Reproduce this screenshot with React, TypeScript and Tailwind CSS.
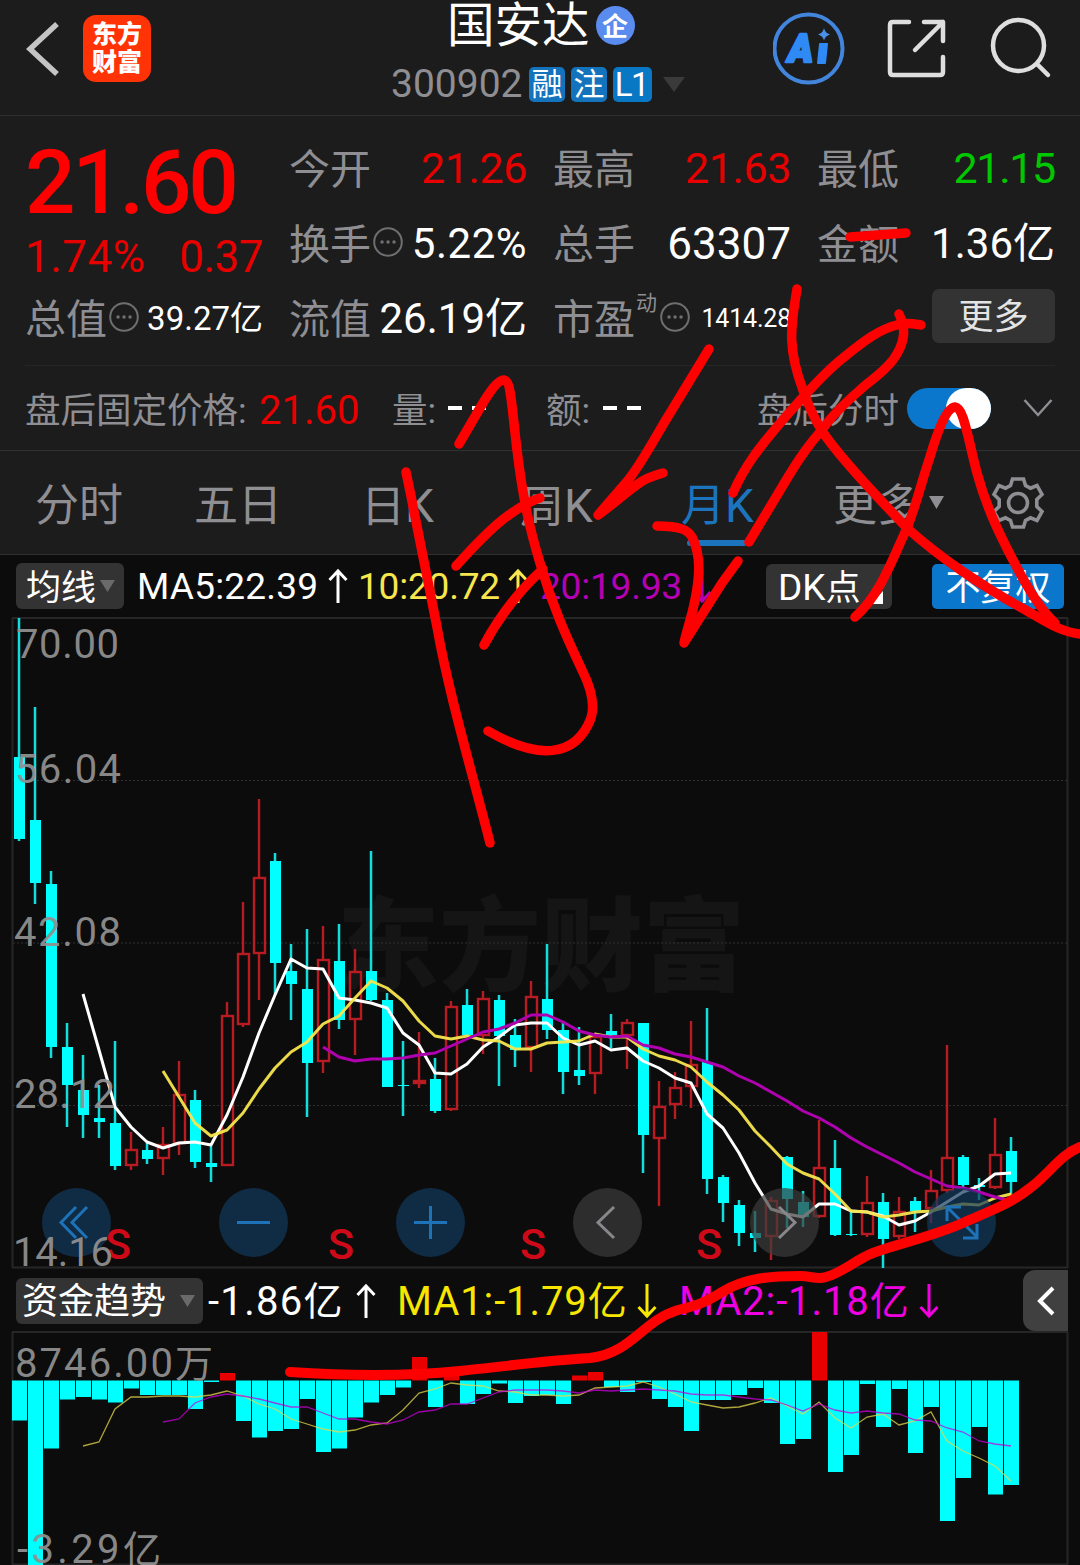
import { ReactNode } from 'react'
import clsx from 'clsx'

type Candle = [high: number, top: number, bottom: number, low: number, up?: 1]

// y positions on the price canvas, one entry per month
const candles: Candle[] = [
  [618, 757, 839, 841], [707, 820, 883, 904], [871, 884, 1047, 1058], [1023, 1047, 1085, 1127],
  [1055, 1090, 1115, 1138], [1085, 1118, 1122, 1138], [1041, 1123, 1166, 1170], [1132, 1149, 1166, 1170, 1],
  [1143, 1150, 1159, 1164], [1127, 1144, 1159, 1175, 1], [1061, 1094, 1144, 1155, 1], [1090, 1100, 1162, 1168],
  [1146, 1163, 1167, 1182], [1002, 1015, 1166, 1166, 1], [902, 953, 1025, 1027, 1], [799, 877, 954, 1000, 1],
  [853, 861, 963, 995], [944, 971, 984, 1020], [929, 989, 1063, 1117], [926, 959, 1062, 1073, 1],
  [924, 961, 1020, 1029], [949, 971, 1020, 1055, 1], [851, 971, 1000, 1001], [993, 1000, 1087, 1087],
  [1041, 1085, 1086, 1116], [1032, 1080, 1084, 1088, 1], [1058, 1079, 1111, 1113], [1001, 1006, 1110, 1111, 1],
  [989, 1005, 1035, 1036], [991, 998, 1036, 1054, 1], [995, 1000, 1036, 1086], [1019, 1035, 1050, 1067],
  [981, 996, 1048, 1072, 1], [944, 999, 1030, 1039], [1023, 1030, 1072, 1094], [1027, 1070, 1076, 1085],
  [1033, 1036, 1074, 1094, 1], [1014, 1031, 1035, 1048], [1019, 1022, 1036, 1069, 1], [1023, 1023, 1135, 1173],
  [1081, 1106, 1139, 1206, 1], [1072, 1087, 1105, 1119, 1], [1021, 1064, 1087, 1108, 1], [1008, 1062, 1179, 1194],
  [1175, 1177, 1203, 1222], [1200, 1205, 1233, 1246], [1211, 1233, 1238, 1252], [1197, 1200, 1237, 1260, 1],
  [1156, 1157, 1199, 1228], [1191, 1202, 1217, 1227], [1120, 1167, 1217, 1218, 1], [1140, 1168, 1235, 1236],
  [1210, 1234, 1235, 1236], [1176, 1202, 1235, 1237, 1], [1193, 1202, 1239, 1268], [1197, 1211, 1237, 1239, 1],
  [1197, 1201, 1211, 1232], [1170, 1190, 1209, 1223, 1], [1045, 1157, 1191, 1193, 1], [1155, 1157, 1185, 1187],
  [1178, 1185, 1187, 1200], [1118, 1154, 1188, 1189, 1], [1137, 1151, 1182, 1196],
]

const ma5 = [994, 1050, 1107, 1127, 1142, 1148, 1143, 1142, 1145, 1115, 1077, 1033, 995, 959, 968, 969, 998, 1000, 1003, 1008, 1033, 1045, 1073, 1074, 1064, 1047, 1037, 1025, 1023, 1023, 1038, 1045, 1041, 1050, 1048, 1061, 1068, 1078, 1083, 1114, 1128, 1153, 1183, 1209, 1214, 1217, 1204, 1204, 1211, 1212, 1216, 1225, 1221, 1212, 1202, 1192, 1186, 1174, 1173]
const ma10 = [1071, 1097, 1123, 1136, 1130, 1113, 1089, 1068, 1052, 1042, 1024, 1016, 998, 981, 988, 1001, 1021, 1036, 1039, 1036, 1040, 1041, 1049, 1049, 1043, 1042, 1041, 1034, 1037, 1037, 1049, 1056, 1060, 1067, 1082, 1095, 1110, 1131, 1147, 1164, 1173, 1179, 1194, 1211, 1212, 1217, 1215, 1212, 1211, 1207, 1204, 1205, 1198, 1194]
const ma20 = [1047, 1057, 1061, 1059, 1059, 1058, 1055, 1053, 1046, 1039, 1032, 1029, 1023, 1015, 1015, 1022, 1031, 1035, 1037, 1036, 1045, 1048, 1054, 1057, 1062, 1067, 1076, 1083, 1092, 1101, 1111, 1118, 1127, 1138, 1147, 1155, 1163, 1172, 1179, 1186, 1188, 1192, 1197, 1201]

// end of each flow bar; values above the zero line are inflows
const ZERO = 1380.5
const flows = [1420.5, 1565, 1448.5, 1399.5, 1397, 1399.5, 1402.5, 1388.5, 1395, 1395, 1395, 1409, 1382, 1373, 1421, 1437.5, 1431, 1429, 1399, 1452, 1448.5, 1417.5, 1402.5, 1395, 1387.5, 1357, 1407, 1372, 1404, 1394, 1383.5, 1403, 1396, 1395, 1404, 1375.5, 1372, 1387, 1392, 1382, 1399, 1407, 1431, 1400, 1400, 1395, 1388, 1403, 1444, 1439, 1332, 1472, 1455, 1384, 1427, 1389, 1453, 1407, 1521, 1478, 1427, 1494.5, 1485]
const flowMa1 = [1446, 1442, 1409, 1397, 1397, 1396, 1396, 1397, 1395, 1391, 1396, 1404, 1409, 1419, 1424, 1429, 1432, 1430, 1425, 1423, 1410, 1393, 1389, 1383, 1385, 1386, 1391, 1392, 1395, 1395, 1396, 1395, 1388, 1387, 1386, 1382, 1387, 1394, 1402, 1405, 1408, 1407, 1403, 1398, 1406, 1414, 1402, 1418, 1428, 1417, 1414, 1425, 1421, 1412, 1441, 1451, 1458, 1466, 1481]
const flowMa2 = [1422, 1419, 1403, 1397, 1394, 1396, 1399, 1403, 1407, 1407, 1413, 1419, 1419, 1422, 1424, 1420, 1412, 1410, 1404, 1404, 1398, 1392, 1390, 1390, 1390, 1391, 1393, 1390, 1391, 1390, 1389, 1390, 1391, 1394, 1395, 1395, 1397, 1399, 1400, 1405, 1411, 1404, 1410, 1413, 1411, 1413, 1414, 1420, 1421, 1428, 1432, 1441, 1444, 1446]

const cx = (i: number) => 19 + i * 16
// every series ends on the last month
const line = (ys: number[]) => ys.map((y, i) => `${cx(i + candles.length - ys.length)},${y}`).join(' ')

function Dots() {
  return (
    <svg className="-mt-[6px] ml-[2px] h-[30px] w-[30px] shrink-0" viewBox="0 0 30 30" fill="none" stroke="#6f6f72" strokeWidth="2">
      <circle cx="15" cy="15" r="13.8" />
      <path d="M9 15h.1M15 15h.1M21 15h.1" strokeWidth="3.4" strokeLinecap="round" />
    </svg>
  )
}

function Caret({ className }: { className?: string }) {
  return (
    <svg className={className} viewBox="0 0 20 14" preserveAspectRatio="none" fill="currentColor">
      <path d="M0 0h20L10 14z" />
    </svg>
  )
}

function Arrow({ down, className }: { down?: boolean; className?: string }) {
  return (
    <svg className={clsx('h-[36px] w-[20px] shrink-0', down && 'rotate-180', className)} viewBox="0 0 20 36" fill="none" stroke="currentColor" strokeWidth="3">
      <path d="M10 35V3M1.500 12L10 3l8.500 9" />
    </svg>
  )
}

function Cell({ label, children }: { label: ReactNode; children: ReactNode }) {
  return (
    <div className="flex h-[75px] items-center justify-between whitespace-nowrap pt-[2px]">
      <span className="flex items-center pt-[3px] text-[41px] text-[#8e8e93]">
        {label}
      </span>
      {children}
    </div>
  )
}

function Header() {
  return (
    <header className="flex h-[116px] border-b border-[#303030]">
      <div className="flex w-[391px] pl-[26px] pt-[15px]">
        <svg className="mt-[5px] h-[58px] w-[34px]" viewBox="0 0 34 58" fill="none" stroke="#c4c4c4" strokeWidth="5.500">
          <path d="M31 4L4 29l27 25" />
        </svg>
        <div className="ml-[23px] flex h-[67px] w-[68px] flex-col items-center justify-center rounded-[13px] bg-[#ff3305] text-[25px] font-black leading-[28px] text-white">
          <span>东方</span>
          <span>财富</span>
        </div>
      </div>
      <div className="w-[382px]">
        <div className="flex h-[50px] items-center pl-[56px]">
          <span className="pt-[4px] text-[47.500px] text-white">国安达</span>
          <span className="ml-[6px] flex h-[39px] w-[39px] items-center justify-center rounded-full bg-[#5a8bee] pt-[3px] text-[26px] font-bold text-white">企</span>
        </div>
        <div className="mt-[15px] flex h-[38px] items-center">
          <span className="w-[138px] text-[39px] text-[#8e8e93]">300902</span>
          <div className="flex gap-[6px] text-[31px] text-white">
            <span className="flex h-[35px] w-[36px] items-center justify-center rounded-[5px] bg-[#1373bd]">融</span>
            <span className="flex h-[35px] w-[36px] items-center justify-center rounded-[5px] bg-[#1373bd]">注</span>
            <span className="flex h-[35px] w-[39px] items-center justify-center rounded-[5px] bg-[#0877c4] pr-[2px] text-[33px] tracking-[-1.500px]">L1</span>
          </div>
          <Caret className="ml-[11px] h-[15px] w-[22px] text-[#3a3a3a]" />
        </div>
      </div>
      <svg className="h-[100px] w-[307px]" viewBox="773 0 307 100" fill="none">
        <circle cx="808.500" cy="48.500" r="34" stroke="#4285dc" strokeWidth="4" />
        <text x="788" y="61.500" fontSize="38" fontWeight="900" fontStyle="italic" fill="#2f8af5" stroke="#2f8af5" strokeWidth="2.500" strokeLinejoin="round">A</text>
        <path d="M820 44h7l-2 19h-7z" fill="#2f8af5" stroke="#2f8af5" strokeWidth="2" strokeLinejoin="round" />
        <path d="M824 28q1 5 6 6.500q-5 1.500-6 6q-1-4.500-6-6q5-1.500 6-6.500z" fill="#4a90e8" />
        <g stroke="#dedede" strokeWidth="4.500" strokeLinecap="round" strokeLinejoin="round">
          <path d="M909 22h-16q-3 0-3 3v47q0 3 3 3h47q3 0 3-3V57M924 22h19v19M943 22L915 50" />
          <circle cx="1018.500" cy="45.500" r="25.500" />
          <path d="M1037 64L1048 75" />
        </g>
      </svg>
    </header>
  )
}

function Quote() {
  return (
    <section className="mx-[25px] grid h-[250px] grid-cols-4 gap-[26px] border-b border-[#262626] pt-[14px]">
      <div>
        <div className="flex h-[104px] items-center text-[89px] font-medium tracking-[-3.300px] text-[#ff0000]">21.60</div>
        <div className="flex h-[46px] items-center justify-between text-[44px] text-[#e60000]">
          <span className="tracking-[0.500px]">1.74%</span>
          <span className="tracking-[-0.500px]">0.37</span>
        </div>
        <Cell label={<>总值<Dots /></>}>
          <span className="text-[33px] text-white">39.27亿</span>
        </Cell>
      </div>
      <div>
        <Cell label="今开"><span className="text-[43px] tracking-[-0.400px] text-[#e60000]">21.26</span></Cell>
        <Cell label={<>换手<Dots /></>}><span className="text-[42px] tracking-[0.500px] text-white">5.22%</span></Cell>
        <Cell label="流值"><span className="text-[42px] text-white">26.19亿</span></Cell>
      </div>
      <div>
        <Cell label="最高"><span className="text-[43px] tracking-[-0.400px] text-[#e60000]">21.63</span></Cell>
        <Cell label="总手"><span className="text-[44px] text-white">63307</span></Cell>
        <Cell label={<>市盈<sup className="-top-[17px] mx-px text-[21px]">动</sup><Dots /></>}>
          <span className="text-[25px] tracking-[-0.200px] text-white">1414.28</span>
        </Cell>
      </div>
      <div>
        <Cell label="最低"><span className="text-[43px] tracking-[-1.300px] text-[#00c800]">21.15</span></Cell>
        <Cell label="金额"><span className="text-[42px] text-white">1.36亿</span></Cell>
        <div className="flex h-[71px] items-center justify-end">
          <button className="h-[54px] w-[123px] rounded-[7px] bg-[#333333] pt-[3px] text-[35px] text-[#e4e4e4]">更多</button>
        </div>
      </div>
    </section>
  )
}

function AfterHours() {
  return (
    <section className="flex h-[85px] items-center whitespace-nowrap border-b border-[#303030] pl-[25px] text-[35.500px] text-[#8e8e93]">
      <span className="w-[234px] pt-[7px]">盘后固定价格:</span>
      <span className="w-[133px] pt-[5px] text-[40px] text-[#e60000]">21.60</span>
      <span className="w-[56px] pt-[7px]">量:</span>
      <Dashes />
      <span className="ml-[60px] w-[57px] pt-[7px]">额:</span>
      <Dashes />
      <span className="ml-[116px] w-[150px] pt-[7px]">盘后分时</span>
      <span className="flex h-[41px] w-[84px] justify-end rounded-full bg-[#0a77cc]">
        <span className="h-[41px] w-[45px] rounded-full bg-white" />
      </span>
      <svg className="ml-[32px] h-[20px] w-[30px]" viewBox="0 0 30 20" fill="none" stroke="#8e8e93" strokeWidth="2.500">
        <path d="M1.500 2L15 17L28.500 2" />
      </svg>
    </section>
  )
}

function Dashes() {
  return (
    <span className="flex w-[38px] justify-between">
      <i className="h-[4px] w-[14px] bg-white" />
      <i className="h-[4px] w-[14px] bg-white" />
    </span>
  )
}

function Tabs() {
  return (
    <nav className="flex h-[104px] items-center whitespace-nowrap border-b border-[#303030] pl-[35px] text-[44px] text-[#8e8e93]">
      <span className="w-[159px] pt-[7px]">分时</span>
      <span className="w-[167px] pt-[7px]">五日</span>
      <span className="w-[159px] pt-[7px]">日<span className="text-[46px]">K</span></span>
      <span className="w-[161px] pt-[7px]">周<span className="text-[46px]">K</span></span>
      <span className="flex h-full w-[152px] flex-col text-[#1b74bd]">
        <span className="flex h-[89px] items-center pt-[20px]">月<span className="text-[46px]">K</span></span>
        <i className="ml-[6px] h-[6px] w-[60px] rounded-full bg-[#1b74bd]" />
      </span>
      <span className="pt-[7px]">更多</span>
      <Caret className="ml-[8px] h-[13px] w-[15px]" />
      <svg className="ml-[47px] h-[54px] w-[54px]" viewBox="-27 -27 54 54" fill="none" stroke="#8e8e93" strokeWidth="3.600">
        <circle r="9.500" />
        <path d="M-5.500-24H5.500L7.500-17.500L12.500-14.800L19-17.500L24-8.500L18.800-3.500V3.500L24 8.500L19 17.500L12.500 14.800L7.500 17.500L5.500 24H-5.500L-7.500 17.500L-12.500 14.800L-19 17.500L-24 8.500L-18.800 3.500V-3.500L-24-8.500L-19-17.500L-12.500-14.800L-7.500-17.500Z" />
      </svg>
    </nav>
  )
}

function AverageBar() {
  return (
    <div className="flex h-[62px] items-center whitespace-nowrap pl-[16px] text-[37px]">
      <span className="flex h-[46px] w-[108px] items-center rounded-[6px] bg-[#333333] pl-[10px] text-[35px] text-white">
        <span className="pt-[4px]">均线</span>
        <Caret className="ml-[4px] h-[12px] w-[15px] text-[#6a6a6a]" />
      </span>
      <span className="ml-[13px] w-[191px] tracking-[0.200px] text-white">MA5:22.39</span>
      <Arrow className="h-[34px] text-white" />
      <span className="ml-[10px] w-[150px] tracking-[-0.200px] text-[#f7e64e]">10:20.72</span>
      <Arrow className="h-[34px] text-[#f7e64e]" />
      <span className="ml-[12px] w-[152px] tracking-[-0.200px] text-[#b500b5]">20:19.93</span>
      <Arrow down className="h-[34px] text-[#b500b5]" />
      <span className="ml-[54px] flex h-[45px] w-[126px] items-center rounded-[6px] bg-[#333333] pl-[12px] text-white">
        <span className="pt-[2px]">DK<span className="text-[35px]">点</span></span>
        <svg className="ml-[10px] mt-[22px] h-[13px] w-[12px]" viewBox="0 0 12 12" preserveAspectRatio="none"><path d="M12 0v12H0z" fill="#fff" /></svg>
      </span>
      <span className="ml-[40px] flex h-[45px] w-[132px] items-center justify-center rounded-[5px] bg-[#0a77cc] pt-[4px] text-[35px] text-white">不复权</span>
    </div>
  )
}

const buttons = [
  { d: 'M34 19L19 34.500L34 50M45 19L30 34.500L45 50', blue: true },
  { d: 'M18 34.500H51', blue: true },
  { d: 'M18 34.500H51M34.500 18V51', blue: true },
  { d: 'M41 19L25 34.500L41 50', blue: false },
  { d: 'M29 19L45 34.500L29 50', blue: false },
  { d: 'M34 19H20V33M20 19L50 49M36 50H50V36', blue: true },
]

function PriceChart() {
  return (
    <div className="relative h-[653px]">
      <svg className="block h-[653px] w-[1080px]" viewBox="0 617 1080 653">
        <text x="337" y="983" fontSize="102" fontWeight="900" fill="#151515">东方财富</text>
        <path d="M12.500 618V1268M1067.500 618V1268M12 618H1068M12 1267.500H1068" stroke="#262626" strokeWidth="2" fill="none" />
        <path d="M13 780.500H1067M13 943H1067M13 1105.500H1067" stroke="#303030" strokeDasharray="2 2" />
        {candles.map(([high, top, bottom, low, up], i) =>
          up ? (
            <g key={i} stroke="#b81c22" strokeWidth="2.400" fill="none">
              <path d={`M${cx(i)} ${high}V${top}M${cx(i)} ${bottom}V${low}`} />
              <rect x={cx(i) - 5} y={top + 1} width="11" height={Math.max(bottom - top - 2, 2)} />
            </g>
          ) : (
            <g key={i}>
              <path d={`M${cx(i)} ${high}V${low}`} stroke="#10dede" strokeWidth="2.500" />
              <rect x={cx(i) - 5} y={top} width="11" height={bottom - top} fill="#00ffff" />
            </g>
          )
        )}
        <g fill="none" strokeWidth="3" strokeLinejoin="round">
          <polyline points={line(ma5)} stroke="#ffffff" />
          <polyline points={line(ma10)} stroke="#f7e64e" strokeOpacity=".95" />
          <polyline points={line(ma20)} stroke="#b000b0" />
        </g>
        <g fontSize="43" fontWeight="500" fill="#cf0a18" textAnchor="middle">
          <text x="118" y="1259">S</text>
          <text x="341" y="1259">S</text>
          <text x="533" y="1259">S</text>
          <text x="709" y="1259">S</text>
        </g>
      </svg>
      <div className="absolute left-[42px] top-[571px] flex gap-[108px]">
        {buttons.map(({ d, blue }) => (
          <button key={d} className={clsx('h-[69px] w-[69px] rounded-full', blue ? 'bg-[#12395d]/70' : 'bg-[#3c3c3c]/70')}>
            <svg viewBox="0 0 69 69" fill="none" stroke={blue ? '#1e72b8' : '#88888c'} strokeWidth="3">
              <path d={d} />
            </svg>
          </button>
        ))}
      </div>
      <svg className="pointer-events-none absolute left-0 top-0 h-[653px] w-[200px]" viewBox="0 617 200 653" fontSize="40" fill="#909090" fillOpacity=".95">
        <text x="16" y="657.500" textLength="103">70.00</text>
        <text x="15" y="782.500" textLength="106">56.04</text>
        <text x="14" y="945.500" textLength="107">42.08</text>
        <text x="14" y="1107.500" textLength="101">28.12</text>
        <text x="13" y="1266" textLength="100">14.16</text>
      </svg>
    </div>
  )
}

function FlowBar() {
  return (
    <div className="flex h-[61px] items-center whitespace-nowrap pl-[16px] text-[40px]">
      <span className="flex h-[46px] w-[187px] items-center rounded-[6px] bg-[#333333] pl-[6px] text-[36px] text-white">
        <span className="pt-[3px]">资金趋势</span>
        <Caret className="ml-[14px] h-[12px] w-[15px] text-[#6a6a6a]" />
      </span>
      <span className="ml-[5px] w-[148px] pt-[2px] tracking-[1.300px] text-white">-1.86<span className="text-[39px]">亿</span></span>
      <Arrow className="text-white" />
      <span className="ml-[21px] w-[240px] pt-[2px] tracking-[0.900px] text-[#f7e600]">MA1:-1.79<span className="text-[39px]">亿</span></span>
      <Arrow down className="text-[#f7e600]" />
      <span className="ml-[22px] w-[240px] pt-[2px] tracking-[0.900px] text-[#f000e0]">MA2:-1.18<span className="text-[39px]">亿</span></span>
      <Arrow down className="text-[#f000e0]" />
      <button className="ml-[84px] flex h-[61px] w-[45px] items-center justify-center rounded-l-[12px] bg-[#404040]">
        <svg className="h-[30px] w-[18px]" viewBox="0 0 18 30" fill="none" stroke="#fff" strokeWidth="4"><path d="M16 2L3 15l13 13" /></svg>
      </button>
    </div>
  )
}

function FlowChart() {
  return (
    <svg className="block h-[234px] w-[1080px]" viewBox="0 1331 1080 234">
      <path d="M12.500 1332V1565M1067.500 1332V1565M12 1332H1068M12 1564.500H1068" stroke="#262626" strokeWidth="2" />
      {flows.map((y, i) => (
        <rect key={i} x={cx(i) - 7} y={Math.min(y, ZERO)} width="15" height={Math.abs(y - ZERO)} fill={y < ZERO ? '#e80000' : '#00ffff'} />
      ))}
      <g fill="none" strokeWidth="1.300" strokeOpacity=".75">
        <polyline points={line(flowMa1)} stroke="#e6d84a" />
        <polyline points={line(flowMa2)} stroke="#c800d8" />
      </g>
      <g fontSize="40" fill="#909090" fillOpacity=".95">
        <text x="15" y="1377" textLength="198">8746.00<tspan fontSize="38">万</tspan></text>
        <text x="17" y="1563" textLength="144">-3.29<tspan fontSize="38">亿</tspan></text>
      </g>
    </svg>
  )
}

// hand-drawn marks on top of the whole screen
function Scribbles() {
  return (
    <svg className="pointer-events-none absolute left-0 top-0 h-[1565px] w-[1080px]" viewBox="0 0 1080 1565" fill="none" stroke="#ff0000" strokeWidth="9.500" strokeLinecap="round" strokeLinejoin="round">
      <path d="M850 237L906 233" />
      <path d="M797 289C790 330 788 350 803 390C809 408 814 418 822 431C840 458 880 500 907 528C940 558 985 588 1022 608C1045 621 1060 632 1080 634" />
      <path d="M733 493C745 465 760 447 781 422C800 400 825 372 843 358C865 340 880 329 897 325C906 322 914 324 921 325" />
      <path d="M899 314C906 328 906 342 893 360C880 376 870 380 860 390C845 403 832 415 822 430C808 445 797 462 788 477L749 542" />
      <path d="M709 349L664 423C650 447 640 465 629 479L598 515C615 503 625 493 638 484C647 477 656 475 663 473" />
      <path d="M657 526C680 526 688 530 692 537C702 556 699 580 695 600C691 620 686 632 684 643L722 583L738 561" />
      <path d="M855 617C880 595 892 560 907 528C918 500 922 480 929 460C937 433 946 408 955 407C964 408 967 435 977 473C987 510 1002 540 1022 577C1032 595 1043 612 1055 623" />
      <path d="M406 472C416 520 425 565 437 627C448 690 470 765 490 843" />
      <path d="M459 444L480 408C490 391 498 380 504 380C511 381 511 400 517 450C523 500 530 530 540 563C552 605 566 636 582 670C592 690 595 705 591 718C576 758 538 760 488 731" />
      <path d="M456 566C470 551 490 528 509 515C520 507 530 501 540 498" />
      <path d="M484 645C500 615 520 590 543 569" />
      <path d="M290 1372C350 1376 410 1376 460 1371C500 1367 540 1361 590 1358C632 1353 642 1321 678 1310C695 1306 705 1303 722 1292C745 1278 770 1276 800 1276C812 1276 817 1280 826 1277C842 1273 855 1260 873 1253C900 1243 935 1236 965 1222C990 1211 1010 1204 1030 1188C1050 1173 1060 1155 1080 1147" strokeWidth="10" />
    </svg>
  )
}

export default function App() {
  return (
    <div className="relative h-[1565px] w-[1080px] overflow-hidden bg-[#1c1c1c] font-[Roboto,'Noto_Sans_CJK_SC',sans-serif] leading-none">
      <Header />
      <Quote />
      <AfterHours />
      <Tabs />
      <main className="bg-[#0c0c0c]">
        <AverageBar />
        <PriceChart />
        <FlowBar />
        <FlowChart />
      </main>
      <Scribbles />
    </div>
  )
}
